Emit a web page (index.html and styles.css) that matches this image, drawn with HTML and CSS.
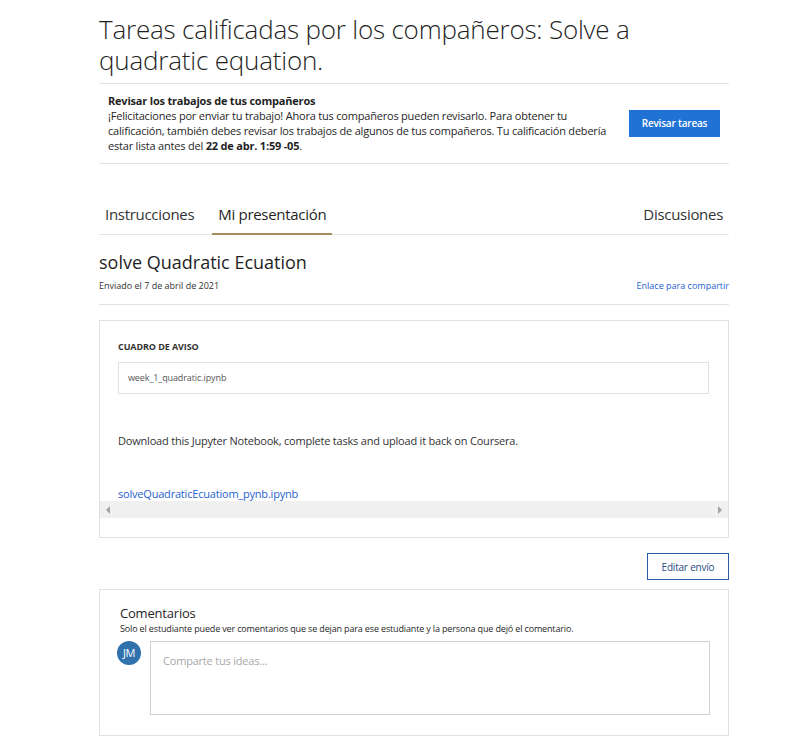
FILE: index.html
```html
<!DOCTYPE html>
<html lang="es">
<head>
<meta charset="utf-8">
<title>Tareas calificadas por los compañeros</title>
<link rel="stylesheet" href="styles.css">
</head>
<body>
<main class="page">
  <h1 class="title">Tareas calificadas por los compañeros: Solve a quadratic equation.</h1>

  <section class="notice">
    <div class="notice-text">
      <div class="notice-head">Revisar los trabajos de tus compañeros</div>
      <p>¡Felicitaciones por enviar tu trabajo! Ahora tus compañeros pueden revisarlo. Para obtener tu calificación, también debes revisar los trabajos de algunos de tus compañeros. Tu calificación debería estar lista antes del <b>22 de abr. 1:59 -05</b>.</p>
    </div>
    <button class="btn-primary">Revisar tareas</button>
  </section>

  <nav class="tabs">
    <a class="tab">Instrucciones</a>
    <a class="tab active">Mi presentación</a>
    <span class="spacer"></span>
    <a class="tab">Discusiones</a>
  </nav>

  <section class="submission-head">
    <h2 class="sub-title">solve Quadratic Ecuation</h2>
    <div class="meta">
      <span>Enviado el 7 de abril de 2021</span>
      <a class="link small">Enlace para compartir</a>
    </div>
  </section>

  <section class="card sub-card">
    <div class="card-inner">
      <div class="label">CUADRO DE AVISO</div>
      <div class="field">week_1_quadratic.ipynb</div>
      <p class="desc">Download this Jupyter Notebook, complete tasks and upload it back on Coursera.</p>
      <a class="link file">solveQuadraticEcuatiom_pynb.ipynb</a>
    </div>
    <div class="hscroll">
      <span class="arrow left"></span>
      <span class="arrow right"></span>
    </div>
  </section>

  <div class="actions">
    <button class="btn-outline">Editar envío</button>
  </div>

  <section class="card comments">
    <h3 class="c-title">Comentarios</h3>
    <p class="c-note">Solo el estudiante puede ver comentarios que se dejan para ese estudiante y la persona que dejó el comentario.</p>
    <div class="c-row">
      <div class="avatar">JM</div>
      <div class="c-input">Comparte tus ideas...</div>
    </div>
  </section>
</main>
</body>
</html>
```

FILE: styles.css
```css
* { box-sizing: border-box; }
html, body { margin: 0; padding: 0; background: #fff; }
body {
  font-family: "Open Sans", "Noto Sans", sans-serif;
  color: #1f1f1f;
}
.page {
  width: 630px;
  margin-left: 99px;
  padding-top: 14px;
}
.title {
  margin: 0;
  font-weight: 300;
  font-size: 26px;
  line-height: 31px;
  letter-spacing: -0.2px;
  color: #1f1f1f;
  padding: 0 50px 7px 0;
  border-bottom: 1px solid #e1e1e1;
}
.notice {
  display: flex;
  align-items: center;
  padding: 9px 9px 10px 9px;
  border-bottom: 1px solid #e1e1e1;
}
.notice-text { flex: 1; font-size: 11px; line-height: 15px; letter-spacing: -0.2px; color: #1f1f1f; }
.notice-head { font-weight: 700; }
.notice-text p { margin: 0; width: 500px; }
.notice-text b { font-weight: 700; }
.btn-primary {
  width: 91px;
  height: 27px;
  border: none;
  background: #2073d5;
  color: #fff;
  font-family: inherit;
  font-size: 10px;
  font-weight: 600;
  letter-spacing: -0.2px;
  padding: 0;
  margin-right: 0;
}
.tabs {
  display: flex;
  margin-top: 35px;
  border-bottom: 1px solid #e6e6e6;
}
.tab {
  font-size: 15px;
  line-height: 20px;
  letter-spacing: -0.3px;
  color: #333;
  padding: 5px 6px 9px 6px;
  margin-right: 12px;
}
.tab:last-child { margin-right: 0; }
.tab.active { border-bottom: 2px solid #a88a5a; margin-bottom: -1px; color: #1f1f1f; }
.spacer { flex: 1; }
.submission-head {
  padding-top: 15px;
  padding-bottom: 12px;
  border-bottom: 1px solid #e1e1e1;
}
.sub-title {
  margin: 0;
  font-weight: 400;
  font-size: 18px;
  line-height: 24px;
  letter-spacing: 0;
  color: #1f1f1f;
}
.meta {
  display: flex;
  justify-content: space-between;
  margin-top: 5px;
  font-size: 9px;
  line-height: 13px;
  letter-spacing: 0;
  color: #333;
}
.link { color: #1f62d0; text-decoration: none; }
.card { border: 1px solid #e1e1e1; }
.sub-card { margin-top: 15px; padding-bottom: 19px; }
.card-inner { padding: 19px 19px 0 18px; }
.label {
  font-size: 9px;
  font-weight: 700;
  line-height: 13px;
  letter-spacing: -0.1px;
  color: #333;
}
.field {
  margin-top: 9px;
  height: 32px;
  border: 1px solid #e1e1e1;
  padding: 0 9px;
  font-size: 9px;
  line-height: 30px;
  color: #555;
  letter-spacing: -0.1px;
}
.desc {
  margin: 39px 0 0 0;
  font-size: 11px;
  line-height: 15px;
  letter-spacing: -0.2px;
  color: #333;
}
.file {
  display: block;
  margin-top: 38px;
  font-size: 11px;
  line-height: 15px;
  letter-spacing: -0.2px;
}
.hscroll {
  display: flex;
  justify-content: space-between;
  align-items: center;
  height: 17px;
  background: #f0f0f0;
  padding: 0 6px;
}
.arrow { width: 0; height: 0; border-top: 4px solid transparent; border-bottom: 4px solid transparent; }
.arrow.left { border-right: 4px solid #a3a3a3; }
.arrow.right { border-left: 4px solid #a3a3a3; }
.actions { display: flex; justify-content: flex-end; padding: 15px 0 9px; }
.btn-outline {
  width: 82px;
  height: 27px;
  border: 1px solid #2a5aa7;
  background: #fff;
  color: #2a4a80;
  font-family: inherit;
  font-size: 10px;
  letter-spacing: -0.2px;
  padding: 0;
}
.comments { padding: 14px 18px 20px 20px; }
.c-title {
  margin: 0;
  font-weight: 400;
  font-size: 13px;
  line-height: 18px;
  letter-spacing: -0.2px;
  color: #1f1f1f;
}
.c-note {
  margin: 0;
  font-size: 9px;
  line-height: 13px;
  letter-spacing: -0.15px;
  color: #1f1f1f;
}
.c-row { display: flex; gap: 9px; margin-top: 6px; }
.avatar {
  width: 24px;
  height: 24px;
  margin-left: -3px;
  border-radius: 50%;
  background: #2f72ad;
  color: #fff;
  font-size: 11px;
  line-height: 24px;
  text-align: center;
  letter-spacing: -0.5px;
  flex: none;
}
.c-input {
  flex: 1;
  height: 74px;
  border: 1px solid #cfcfd6;
  padding: 11px 12px;
  font-size: 11px;
  line-height: 15px;
  color: #a8a8a8;
  letter-spacing: -0.2px;
}
```
